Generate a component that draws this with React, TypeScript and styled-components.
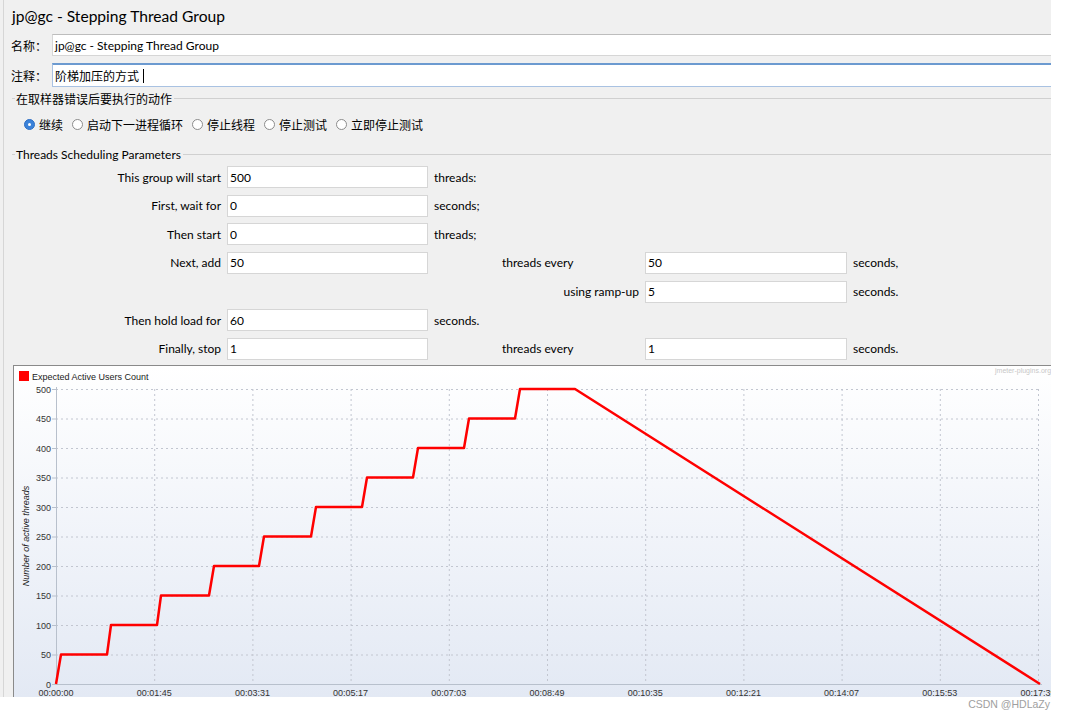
import styled, { createGlobalStyle } from "styled-components";

const GlobalStyle = createGlobalStyle`
  html, body {
    margin: 0;
    padding: 0;
    background: #ffffff;
  }
  body {
    font-family: Lato, "Noto Sans CJK SC", sans-serif;
    font-size: 12px;
    color: #000;
  }
`;

const Page = styled.div`
  width: 1065px;
  height: 722px;
  display: grid;
  grid-template-columns: 1051px 14px;
  grid-template-rows: 697px 25px;
  overflow: hidden;
`;

const Panel = styled.div`
  background: #f0f0f0;
  box-shadow: inset 3px 0 0 #f0f0f0, inset 4px 0 0 #d6d6d6;
  display: flex;
  flex-direction: column;
  overflow: hidden;
`;

const Title = styled.div`
  height: 31px;
  margin-bottom: 3px;
  padding-left: 12px;
  display: flex;
  align-items: center;
  font-size: 15.6px;
`;

const FieldRow = styled.div<{ $gap?: number }>`
  display: flex;
  align-items: center;
  margin-top: ${(p) => p.$gap ?? 0}px;
`;

const FieldLabel = styled.div`
  width: 41px;
  padding-left: 11px;
  flex: none;
`;

const TextBox = styled.div<{ $focused?: boolean }>`
  flex: 1;
  box-sizing: border-box;
  height: ${(p) => (p.$focused ? 24 : 22)}px;
  background: #fff;
  padding-left: 2px;
  display: flex;
  align-items: center;
  border: 1px solid ${(p) => (p.$focused ? "#a9c2e2" : "#d6d6d6")};
  border-top: ${(p) => (p.$focused ? "2px solid #6c9ad0" : "1px solid #bdbdbd")};
  border-right: none;
`;

const Caret = styled.span`
  display: inline-block;
  width: 1px;
  height: 14px;
  background: #000;
  margin-left: 4px;
`;

const GroupHeader = styled.div<{ $gap: number }>`
  display: flex;
  align-items: center;
  height: 14px;
  margin: ${(p) => p.$gap}px 0 0 12px;
  &::before {
    content: "";
    width: 3px;
    border-top: 1px solid #d0d0d0;
    margin-right: 1px;
  }
  &::after {
    content: "";
    flex: 1;
    border-top: 1px solid #d0d0d0;
    margin-left: 2px;
  }
`;

const RadioRow = styled.div`
  display: flex;
  align-items: center;
  gap: 9px;
  height: 16px;
  margin: 11px 0 0 24px;
`;

const RadioItem = styled.label`
  display: flex;
  align-items: center;
  gap: 4px;
`;

const RadioDot = styled.span<{ $checked?: boolean }>`
  box-sizing: border-box;
  width: 11px;
  height: 11px;
  border-radius: 50%;
  border: 1px solid ${(p) => (p.$checked ? "#2f6fc4" : "#8c8c8c")};
  background: ${(p) => (p.$checked ? "#3b82d9" : "#fff")};
  display: flex;
  align-items: center;
  justify-content: center;
  &::after {
    content: "";
    width: 3px;
    height: 3px;
    border-radius: 50%;
    background: ${(p) => (p.$checked ? "#fff" : "transparent")};
  }
`;

const ParamGrid = styled.div`
  display: grid;
  grid-template-columns: 221px 201px 62px 137px 202px auto;
  column-gap: 6px;
  grid-auto-rows: 22px;
  row-gap: 6.67px;
  align-items: center;
  margin-top: 5px;
`;

const Cell = styled.div<{ $col: number; $row: number; $right?: boolean }>`
  grid-column: ${(p) => p.$col};
  grid-row: ${(p) => p.$row};
  text-align: ${(p) => (p.$right ? "right" : "left")};
  white-space: nowrap;
`;

const ParamBox = styled.div<{ $col: number; $row: number }>`
  grid-column: ${(p) => p.$col};
  grid-row: ${(p) => p.$row};
  box-sizing: border-box;
  height: 22px;
  background: #fff;
  border: 1px solid #d6d6d6;
  padding-left: 2px;
  display: flex;
  align-items: center;
`;

const ChartBox = styled.div`
  flex: 1;
  margin: 5px 0 0 13px;
  border-top: 1px solid #8a8a8a;
  border-left: 1px solid #8a8a8a;
  background: #fff;
  overflow: hidden;
  svg {
    display: block;
  }
`;

const Footer = styled.div`
  grid-column: 1 / span 2;
  text-align: right;
  padding-right: 15px;
  font-family: "Liberation Sans", Arial, sans-serif;
  font-size: 10.5px;
  line-height: 15px;
  color: #a0a0a0;
`;

type ParamRow = {
  label?: string;
  value?: string;
  unit?: string;
  mid?: string;
  midRight?: boolean;
  value2?: string;
  unit2?: string;
};

const params: ParamRow[] = [
  { label: "This group will start", value: "500", unit: "threads:" },
  { label: "First, wait for", value: "0", unit: "seconds;" },
  { label: "Then start", value: "0", unit: "threads;" },
  { label: "Next, add", value: "50", mid: "threads every", value2: "50", unit2: "seconds," },
  { mid: "using ramp-up", midRight: true, value2: "5", unit2: "seconds." },
  { label: "Then hold load for", value: "60", unit: "seconds." },
  { label: "Finally, stop", value: "1", mid: "threads every", value2: "1", unit2: "seconds." },
];

const radios = ["继续", "启动下一进程循环", "停止线程", "停止测试", "立即停止测试"];

// chart geometry, in chart-local pixels (chart inner origin is page 14,366)
const W = 1037;
const H = 331;
const LEFT = 42;
const RIGHT = 1026;
const py = (v: number) => 318 - v * 0.59;
const px = (x: number) => x - 14;

const steps: [number, number][] = [
  [56, 0], [61, 50], [107, 50], [111, 100], [157, 100], [161, 150],
  [209, 150], [214, 200], [259, 200], [264, 250], [311, 250], [316, 300],
  [362, 300], [367, 350], [413, 350], [418, 400], [464, 400], [469, 450],
  [515, 450], [520, 500], [575, 500], [1040, 0],
];

const xLabels = [
  "00:00:00", "00:01:45", "00:03:31", "00:05:17", "00:07:03", "00:08:49",
  "00:10:35", "00:12:21", "00:14:07", "00:15:53", "00:17:39",
];

function Chart() {
  const yVals = [0, 50, 100, 150, 200, 250, 300, 350, 400, 450, 500];
  const tickX = (k: number) => LEFT + 98.2 * k;
  return (
    <svg width={W} height={H} viewBox={`0 0 ${W} ${H}`}>
      <defs>
        <linearGradient id="bg" x1="0" y1="0" x2="0" y2="1">
          <stop offset="0" stopColor="#ffffff" />
          <stop offset="1" stopColor="#e3e9f4" />
        </linearGradient>
      </defs>
      <rect x={0} y={0} width={W} height={H} fill="url(#bg)" />
      <g fontFamily='"Liberation Sans", Arial, sans-serif' fontSize={9} fill="#333">
        <rect x={5} y={5} width={10} height={10} fill="#ff0000" />
        <text x={18} y={14} fill="#222">Expected Active Users Count</text>
        <text x={981} y={7} fontSize={7} fill="#c8c8c8">jmeter-plugins.org</text>

        {yVals.map((v) => (
          <g key={v}>
            {v > 0 && (
              <line
                x1={LEFT}
                x2={RIGHT}
                y1={py(v) + 0.5}
                y2={py(v) + 0.5}
                stroke="#c2c6d0"
                strokeDasharray="2 3"
              />
            )}
            <line x1={LEFT - 4} x2={LEFT} y1={py(v) + 0.5} y2={py(v) + 0.5} stroke="#b8c0cc" />
            <text x={LEFT - 5} y={py(v) + 3.5} textAnchor="end">
              {v}
            </text>
          </g>
        ))}

        {xLabels.map((t, k) => (
          <g key={t}>
            {k > 0 && (
              <line
                x1={tickX(k) + 0.5}
                x2={tickX(k) + 0.5}
                y1={py(500)}
                y2={py(0)}
                stroke="#c2c6d0"
                strokeDasharray="2 3"
              />
            )}
            <text x={tickX(k)} y={330} textAnchor="middle">
              {t}
            </text>
          </g>
        ))}

        <line x1={LEFT + 0.5} x2={LEFT + 0.5} y1={py(500) - 2} y2={py(0)} stroke="#b8c0cc" />
        <line x1={LEFT} x2={RIGHT + 2} y1={py(0) + 0.5} y2={py(0) + 0.5} stroke="#b8c0cc" />

        <text
          transform={`translate(15 170) rotate(-90)`}
          textAnchor="middle"
          fontStyle="italic"
          fill="#222"
        >
          Number of active threads
        </text>
      </g>
      <polyline
        points={steps.map(([x, v]) => `${px(x)},${py(v)}`).join(" ")}
        fill="none"
        stroke="#ff0000"
        strokeWidth={2.5}
        strokeLinejoin="round"
      />
    </svg>
  );
}

export default function App() {
  return (
    <Page>
      <GlobalStyle />
      <Panel>
        <Title>jp@gc - Stepping Thread Group</Title>
        <FieldRow>
          <FieldLabel>名称：</FieldLabel>
          <TextBox>jp@gc - Stepping Thread Group</TextBox>
        </FieldRow>
        <FieldRow $gap={7}>
          <FieldLabel>注释：</FieldLabel>
          <TextBox $focused>
            阶梯加压的方式
            <Caret />
          </TextBox>
        </FieldRow>

        <GroupHeader $gap={4}>在取样器错误后要执行的动作</GroupHeader>
        <RadioRow>
          {radios.map((r, i) => (
            <RadioItem key={r}>
              <RadioDot $checked={i === 0} />
              {r}
            </RadioItem>
          ))}
        </RadioRow>

        <GroupHeader $gap={15}>Threads Scheduling Parameters</GroupHeader>
        <ParamGrid>
          {params.map((p, i) => {
            const row = i + 1;
            return [
              p.label && (
                <Cell key={`l${i}`} $col={1} $row={row} $right>
                  {p.label}
                </Cell>
              ),
              p.value && (
                <ParamBox key={`v${i}`} $col={2} $row={row}>
                  {p.value}
                </ParamBox>
              ),
              p.unit && (
                <Cell key={`u${i}`} $col={3} $row={row}>
                  {p.unit}
                </Cell>
              ),
              p.mid && (
                <Cell key={`m${i}`} $col={4} $row={row} $right={p.midRight}>
                  {p.mid}
                </Cell>
              ),
              p.value2 && (
                <ParamBox key={`w${i}`} $col={5} $row={row}>
                  {p.value2}
                </ParamBox>
              ),
              p.unit2 && (
                <Cell key={`x${i}`} $col={6} $row={row}>
                  {p.unit2}
                </Cell>
              ),
            ];
          })}
        </ParamGrid>

        <ChartBox>
          <Chart />
        </ChartBox>
      </Panel>
      <div />
      <Footer>CSDN @HDLaZy</Footer>
    </Page>
  );
}
